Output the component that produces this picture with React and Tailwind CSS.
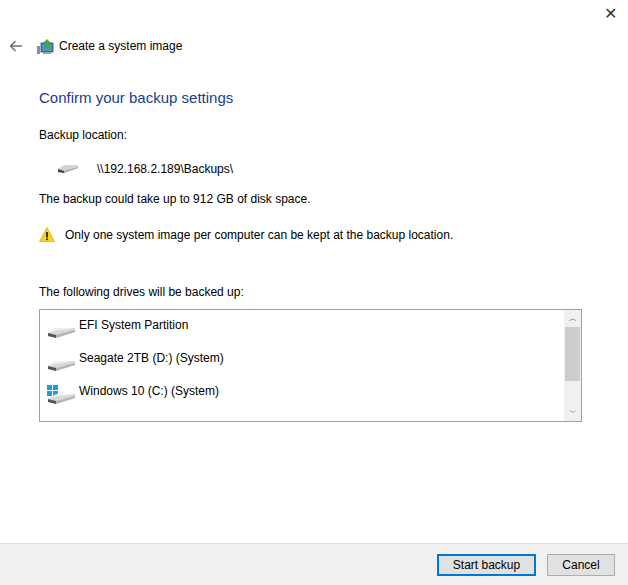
const Drive = ({ win }) => (
    <svg width="30" height="20" viewBox="0 0 30 20">
        {win && (
            <g fill="#1e9be8">
                <rect x="1" y="0" width="5" height="5" />
                <rect x="7" y="0" width="5" height="5" />
                <rect x="1" y="6" width="5" height="5" />
                <rect x="7" y="6" width="5" height="5" />
            </g>
        )}
        <path d="M2 14 L10 9 L29 9 L29 13 L10 19 L2 17 Z" fill="#d8d8d8" />
        <path d="M2 14 L10 12 L29 9 L10 9 Z" fill="#eeeeee" />
        <path d="M2 14 L10 16 L10 19 L2 17 Z" fill="#555" />
        <path d="M10 16 L29 11 L29 13 L10 19 Z" fill="#b5b5b5" />
    </svg>
);

const SmallDrive = () => (
    <svg width="20" height="10" viewBox="0 0 20 10">
        <path d="M0 5 L6 1 L20 1 L20 4 L6 9 L0 8 Z" fill="#d4d4d4" />
        <path d="M0 5 L6 7 L6 9 L0 8 Z" fill="#444" />
        <path d="M6 7 L20 3 L20 4 L6 9 Z" fill="#aaa" />
    </svg>
);

const Warning = () => (
    <svg width="16" height="15" viewBox="0 0 16 15">
        <path d="M8 0.5 L15.5 14.5 L0.5 14.5 Z" fill="#f8d21c" stroke="#c9a100" strokeWidth="0.6" />
        <rect x="7.2" y="5" width="1.6" height="5.5" fill="#111" />
        <rect x="7.2" y="11.5" width="1.6" height="1.6" fill="#111" />
    </svg>
);

const TitleIcon = () => (
    <svg width="18" height="18" viewBox="0 0 18 18">
        <rect x="0" y="9" width="3" height="8" fill="#8a8f96" />
        <rect x="4" y="6" width="12" height="9" fill="#2f5e9e" stroke="#5a6d84" />
        <rect x="5" y="7" width="10" height="7" fill="#4d8fd6" />
        <path d="M8 2 L12 2 L12 8 L14 8 L10 12 L6 8 L8 8 Z" fill="#3fae3a" transform="rotate(180 10 7)" />
        <rect x="6" y="15" width="8" height="2" fill="#9aa0a8" />
    </svg>
);

const BackArrow = () => (
    <svg width="14" height="12" viewBox="0 0 14 12" fill="none" stroke="#6d6d6d" strokeWidth="1.4">
        <path d="M13 6 H1.5 M6.5 1 L1.5 6 L6.5 11" />
    </svg>
);

export default function App() {
    const drives = [
        { name: "EFI System Partition" },
        { name: "Seagate 2TB (D:) (System)" },
        { name: "Windows 10 (C:) (System)", win: true },
    ];

    return (
        <div className="w-[628px] h-[585px] bg-white flex flex-col text-[12px] text-black" style={{ fontFamily: '"Liberation Sans", Arial, sans-serif' }}>
            <div className="flex justify-end pr-[11px] pt-[6px] h-[30px]">
                <span className="text-[16px] leading-none text-[#333]">✕</span>
            </div>
            <div className="flex items-center h-[32px] pl-[9px]">
                <span className="w-[28px] flex"><BackArrow /></span>
                <TitleIcon />
                <span className="ml-[4px]">Create a system image</span>
            </div>
            <div className="flex-1 pl-[39px] pr-[46px]">
                <div className="mt-[25px] text-[15px] text-[#1a3c8f]">Confirm your backup settings</div>
                <div className="mt-[16px]">Backup location:</div>
                <div className="flex items-center mt-[16px] pl-[19px]">
                    <SmallDrive />
                    <span className="ml-[19px]">\\192.168.2.189\Backups\</span>
                </div>
                <div className="mt-[12px]">The backup could take up to 912 GB of disk space.</div>
                <div className="flex items-center mt-[18px]">
                    <Warning />
                    <span className="ml-[10px]">Only one system image per computer can be kept at the backup location.</span>
                </div>
                <div className="mt-[39px]">The following drives will be backed up:</div>
                <div className="mt-[8px] h-[113px] border border-[#a0a0a0] flex">
                    <div className="flex-1 pt-[9px] pl-[6px] flex flex-col gap-[13px]">
                        {drives.map((d) => (
                            <div key={d.name} className="flex items-end h-[20px]">
                                <Drive win={d.win} />
                                <span className="ml-[3px] mb-[5px]">{d.name}</span>
                            </div>
                        ))}
                    </div>
                    <div className="w-[17px] bg-[#f0f0f0] flex flex-col items-center">
                        <span className="text-[8px] h-[17px] leading-[17px] text-[#606060]">︿</span>
                        <div className="w-[15px] h-[54px] bg-[#cdcdcd]" />
                        <div className="flex-1" />
                        <span className="text-[8px] h-[17px] leading-[17px] text-[#606060]">﹀</span>
                    </div>
                </div>
            </div>
            <div className="h-[42px] bg-[#f0f0f0] border-t border-[#dfdfdf] flex items-center justify-end pr-[13px] gap-[11px]">
                <button className="w-[99px] h-[22px] bg-[#e1e1e1] border-2 border-[#0078d7]">Start backup</button>
                <button className="w-[68px] h-[22px] bg-[#e1e1e1] border border-[#adadad]">Cancel</button>
            </div>
        </div>
    );
}
